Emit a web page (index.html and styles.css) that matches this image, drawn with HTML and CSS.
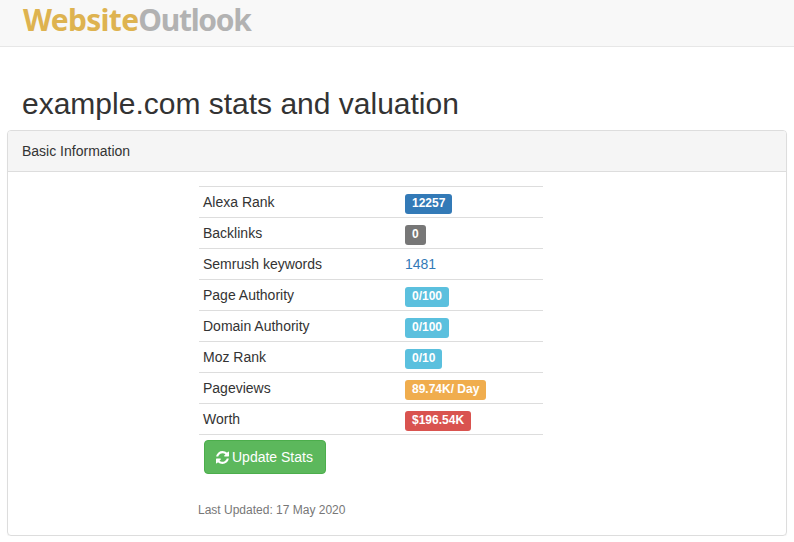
FILE: index.html
```html
<!DOCTYPE html>
<html lang="en">
<head>
<meta charset="utf-8">
<title>example.com stats and valuation</title>
<link rel="stylesheet" href="styles.css">
</head>
<body>
<nav class="navbar"><a class="brand" href="#"><span class="brand-a">Website</span><span class="brand-b">Outlook</span></a></nav>
<main class="page">
<h1 class="title">example.com stats and valuation</h1>
<section class="panel">
<div class="panel-heading">Basic Information</div>
<div class="panel-body">
<table class="stats">
<tr><td class="name">Alexa Rank</td><td><span class="label primary">12257</span></td></tr>
<tr><td class="name">Backlinks</td><td><span class="label default">0</span></td></tr>
<tr><td class="name">Semrush keywords</td><td class="link">1481</td></tr>
<tr><td class="name">Page Authority</td><td><span class="label info">0/100</span></td></tr>
<tr><td class="name">Domain Authority</td><td><span class="label info">0/100</span></td></tr>
<tr><td class="name">Moz Rank</td><td><span class="label info">0/10</span></td></tr>
<tr><td class="name">Pageviews</td><td><span class="label warning">89.74K/ Day</span></td></tr>
<tr><td class="name">Worth</td><td><span class="label danger">$196.54K</span></td></tr>
</table>
<button class="btn" type="button"><svg class="icon" viewBox="0 0 1536 1536" aria-hidden="true"><path fill="currentColor" d="M1511 928q0 5-1 7-64 268-268 434.5t-478 166.5q-146 0-282.5-55t-243.5-157l-129 129q-19 19-45 19t-45-19-19-45v-448q0-26 19-45t45-19h448q26 0 45 19t19 45-19 45l-137 137q71 66 161 102t187 36q134 0 250-65t186-179q11-17 53-117 8-23 30-23h192q13 0 22.5 9.5t9.5 22.5zm25-800v448q0 26-19 45t-45 19h-448q-26 0-45-19t-19-45 19-45l138-138q-148-137-349-137-134 0-250 65t-186 179q-11 17-53 117-8 23-30 23h-199q-13 0-22.5-9.5t-9.5-22.5v-7q65-268 270-434.5t480-166.5q146 0 284 55.5t245 156.5l130-129q19-19 45-19t45 19 19 45z"/></svg>Update Stats</button>
<p class="updated">Last Updated: 17 May 2020</p>
</div>
</section>
</main>
</body>
</html>
```
FILE: styles.css
```css
* { box-sizing: border-box; }
html, body { margin: 0; padding: 0; }
body {
  font-family: "Liberation Sans", Arial, sans-serif;
  font-size: 14px;
  line-height: 20px;
  color: #333;
  background: #fff;
}
.navbar {
  height: 47px;
  background: #f8f8f8;
  border-bottom: 1px solid #e7e7e7;
  padding-left: 23px;
}
.brand {
  display: block;
  font-family: "Noto Sans", sans-serif;
  font-weight: 700;
  font-size: 30px;
  line-height: 40px;
  text-decoration: none;
}
.brand-a { color: #deb350; letter-spacing: -0.7px; }
.brand-b { color: #b2b2b2; letter-spacing: -1.3px; }
.page { padding: 0 7px; }
.title {
  margin: 37px 0 7px;
  padding-left: 15px;
  font-size: 30px;
  font-weight: 400;
  line-height: 39px;
  color: #333;
}
.panel {
  border: 1px solid #ddd;
  border-radius: 4px;
  box-shadow: 0 1px 1px rgba(0,0,0,.05);
  height: 406px;
}
.panel-heading {
  height: 41px;
  padding: 10px 14px;
  background: #f5f5f5;
  border-bottom: 1px solid #ddd;
  border-radius: 3px 3px 0 0;
}
.panel-body { padding: 14px 0 0 191px; }
.stats {
  width: 344px;
  border-collapse: collapse;
  table-layout: fixed;
}
.stats td {
  height: 31px;
  padding: 0 5px;
  border-top: 1px solid #ddd;
  border-bottom: 1px solid #ddd;
  vertical-align: middle;
}
.stats .name { width: 201px; padding-left: 4px; }
.link { color: #337ab7; }
.label {
  display: inline-block;
  margin-top: 4px;
  padding: 1px 7px 3px;
  border-radius: 3px;
  color: #fff;
  font-size: 12px;
  font-weight: 700;
  line-height: 16px;
  vertical-align: middle;
}
.primary { background: #337ab7; }
.default { background: #777; }
.info { background: #5bc0de; }
.warning { background: #f0ad4e; }
.danger { background: #d9534f; }
.btn {
  display: flex;
  align-items: center;
  width: 122px;
  height: 34px;
  margin: 5px 0 0 5px;
  padding: 0 11px;
  background: #5cb85c;
  border: 1px solid #4cae4c;
  border-radius: 4px;
  color: #fff;
  font: inherit;
  white-space: nowrap;
}
.icon { width: 13px; height: 13px; margin-right: 3px; flex: none; }
.updated {
  margin: 26px 0 0 -1px;
  font-size: 12px;
  line-height: 20px;
  color: #777;
}
```
